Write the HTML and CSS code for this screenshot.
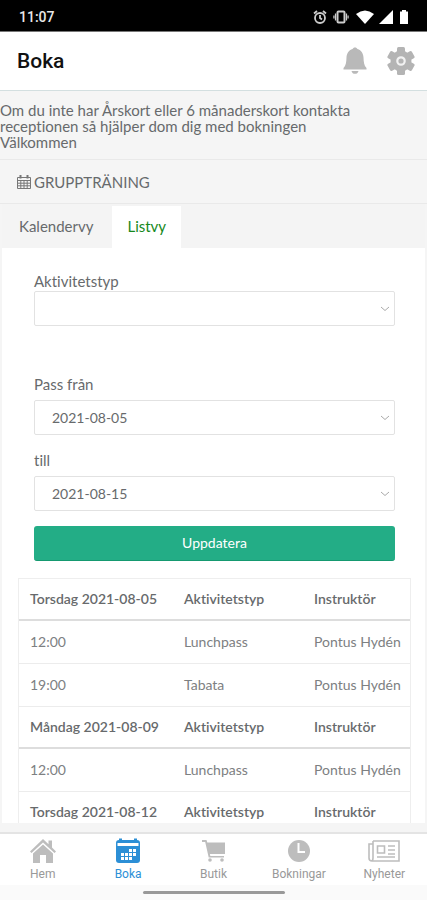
FILE: index.html
```html
<!DOCTYPE html>
<html lang="sv">
<head>
<meta charset="utf-8">
<meta name="viewport" content="width=device-width, initial-scale=1">
<title>Boka</title>
<link rel="stylesheet" href="styles.css">
</head>
<body>
<div class="status">
  <span class="clock">11:07</span>
  <div class="status-icons">
    <svg width="14" height="16" viewBox="0 0 14 16" fill="none" stroke="#ccc" stroke-width="1.800"><circle cx="7" cy="9" r="5"/><path d="M7 6v3l2 1.500M1 4.500l3-2.500M13 4.500l-3-2.500"/></svg>
    <svg width="16" height="16" viewBox="0 0 16 16" fill="none" stroke="#ccc" stroke-width="2"><rect x="4.500" y="2.500" width="7" height="11" rx="1"/><path d="M2.500 4.500v7M13.500 4.500v7M.9 6.500v3M15.100 6.500v3" stroke-width="1.200"/></svg>
    <svg width="20" height="16" viewBox="0 0 20 16" fill="#fff"><path d="M1 5Q10-2 19 5L10 15z"/></svg>
    <svg width="14" height="16" viewBox="0 0 14 16" fill="#fff"><path d="M14 1v14H0z"/></svg>
    <svg class="battery" width="10" height="16" viewBox="0 0 10 16" fill="#fff"><path d="M3 1h4v1.500h2V15H1V2.500h2z"/></svg>
  </div>
</div>
<header class="appbar">
  <h1>Boka</h1>
  <button class="icon-button" aria-label="Aviseringar"><svg width="24" height="28" viewBox="0 0 24 28" fill="#b9b9b9"><path d="M12 0.500c-1.300 0-2 .6-2.400 1.500C5.500 3.400 3.700 6.500 3.500 10.500 3.300 15 3 18.500.5 21v1.500h23V21c-2.500-2.500-2.800-6-3-10.500-.2-4-2-7.100-6.100-8.500C14 1.100 13.300.5 12 .5zM8.500 24h7c-.5 2-1.800 2.800-3.500 2.800s-3-.8-3.500-2.800z"/></svg></button>
  <button class="icon-button" aria-label="Inställningar"><svg width="28" height="28" viewBox="0 0 28 28"><g fill="#b4b4b4"><circle cx="14" cy="14" r="10.500"/><rect x="10" y="0" width="8" height="28" rx="1.500"/><rect x="10" y="0" width="8" height="28" rx="1.500" transform="rotate(60 14 14)"/><rect x="10" y="0" width="8" height="28" rx="1.500" transform="rotate(120 14 14)"/></g><circle cx="14" cy="14" r="3.700" fill="#b4b4b4" stroke="#f2f2f2" stroke-width="2.200"/></svg></button>
</header>
<main>
  <p class="notice">Om du inte har Årskort eller 6 månaderskort kontakta<br>receptionen så hjälper dom dig med bokningen<br>Välkommen</p>
  <h2><svg width="14" height="15" viewBox="0 0 14 15" fill="none" stroke="#777"><path d="M.5 3.500h13v11H.5zM.5 6.500h13M.5 9.200h13M.5 11.800h13M3.800 6v8M7 6v8M10.200 6v8"/><path d="M3.500 1v3.500M10.500 1v3.500" stroke-width="2"/></svg>GRUPPTRÄNING</h2>
  <section class="panel">
    <nav class="tabs"><a href="#kalender">Kalendervy</a><a href="#lista" class="active">Listvy</a></nav>
    <form class="filters">
      <div class="field activity">
        <label for="type">Aktivitetstyp</label>
        <div class="select"><select id="type"><option></option></select><svg width="10" height="6" viewBox="0 0 10 6"><path d="M1 1l4 3.500L9 1"/></svg></div>
      </div>
      <div class="field">
        <label for="from">Pass från</label>
        <div class="select"><select id="from"><option>2021-08-05</option></select><svg width="10" height="6" viewBox="0 0 10 6"><path d="M1 1l4 3.500L9 1"/></svg></div>
      </div>
      <div class="field">
        <label for="to">till</label>
        <div class="select"><select id="to"><option>2021-08-15</option></select><svg width="10" height="6" viewBox="0 0 10 6"><path d="M1 1l4 3.500L9 1"/></svg></div>
      </div>
      <button type="button" class="update">Uppdatera</button>
    </form>
    <div class="table-wrap">
      <table>
        <tr><th class="day">Torsdag 2021-08-05</th><th class="kind">Aktivitetstyp</th><th>Instruktör</th></tr>
        <tr><td>12:00</td><td>Lunchpass</td><td>Pontus Hydén</td></tr>
        <tr><td>19:00</td><td>Tabata</td><td>Pontus Hydén</td></tr>
        <tr><th>Måndag 2021-08-09</th><th>Aktivitetstyp</th><th>Instruktör</th></tr>
        <tr><td>12:00</td><td>Lunchpass</td><td>Pontus Hydén</td></tr>
        <tr><th>Torsdag 2021-08-12</th><th>Aktivitetstyp</th><th>Instruktör</th></tr>
      </table>
    </div>
  </section>
</main>
<nav class="bottom">
  <a href="#hem"><svg width="28" height="26" viewBox="0 0 28 26" fill="#bdbdbd"><path d="M14 1L1 13.500l1.500 1.500L14 4.500 25.500 15l1.500-1.500-4-4V2.500h-3.500v3.700z"/><path d="M14 6.500L4 15.500V25h7v-8h6v8h7v-9.500z"/></svg>Hem</a>
  <a href="#boka" class="current"><svg width="26" height="26" viewBox="0 0 26 26"><rect x="1" y="2" width="24" height="23" rx="3" fill="#2c8fd6"/><path d="M2.500 6.500h21" stroke="#fff" stroke-width="3"/><path d="M5.500 0.500v4M20.500 0.500v4" stroke="#2c8fd6" stroke-width="3"/><g fill="#fff"><path d="M14 11h3v3h-3zM18 11h3v3h-3zM6 15h3v3H6zM10 15h3v3h-3zM14 15h3v3h-3zM18 15h3v3h-3zM6 19h3v3H6zM10 19h3v3h-3zM14 19h3v3h-3z"/></g></svg>Boka</a>
  <a href="#butik"><svg width="26" height="26" viewBox="0 0 26 26" fill="#bdbdbd"><path d="M2 2h4.500l.8 2.500H25V16H9.900l.4 2H24v1.500H8.700L5.200 4H2z"/><circle cx="10" cy="22" r="1.800"/><circle cx="22" cy="22" r="1.800"/></svg>Butik</a>
  <a href="#bokningar"><svg width="26" height="26" viewBox="0 0 26 26"><circle cx="13" cy="13" r="11" fill="#bdbdbd"/><path d="M12.500 5v9H19" fill="none" stroke="#fff" stroke-width="2"/></svg>Bokningar</a>
  <a href="#nyheter"><svg width="32" height="26" viewBox="0 0 32 26" fill="none" stroke="#bdbdbd" stroke-width="1.600"><path d="M5 3h26v20H4c-2 0-3-1-3-3V6h4M5 3v17c0 2-1 3-2 3"/><path d="M9.500 8h7v7h-7zM20 8h7M20 12h7M20 16h7M9 19h18"/></svg>Nyheter</a>
</nav>
<div class="gesture"><span></span></div>
</body>
</html>
```
FILE: styles.css
```css
* { box-sizing: border-box; }
body {
  margin: 0;
  height: 100vh;
  display: flex;
  flex-direction: column;
  overflow: hidden;
  background: #f5f5f5;
  color: #676a6c;
  font: 14px/16px Lato, sans-serif;
  font-variant-ligatures: none;
}
h1, h2, p { margin: 0; }
a { color: inherit; text-decoration: none; }
svg { display: block; flex: none; }
button, select { font: inherit; color: inherit; border: 0; }
.status {
  flex: none;
  height: 32px;
  display: flex;
  align-items: center;
  justify-content: space-between;
  padding: 2px 18px 0 19px;
  background: #000;
  color: #e8e8e8;
  border-bottom: 1px solid #777;
}
.clock { font: 500 14px/16px Roboto, sans-serif; }
.status-icons { display: flex; gap: 4px; align-items: center; }
.status-icons svg:nth-child(2) { margin: 0 2px; }
.battery { margin-left: 2px; }
.appbar {
  flex: none;
  height: 59px;
  display: flex;
  align-items: center;
  gap: 20px;
  padding: 0 12px 0 17px;
  background: #fff;
  border-bottom: 1px solid #d3dfe0;
}
h1 { flex: 1; color: #111; font: 500 21px/24px Roboto, sans-serif; }
.icon-button { padding: 0; background: none; }
main { flex: 1; min-height: 0; overflow: hidden; border-bottom: 9px solid #f5f5f5; }
.notice { padding: 11px 0 9px; border-bottom: 1px solid #e9e9e9; font-size: 15px; }
h2 {
  display: flex;
  align-items: center;
  gap: 3px;
  height: 44px;
  padding-left: 17px;
  border-bottom: 1px solid #e9e9e9;
  font-size: 15px;
  font-weight: 400;
}
.panel { margin: 0 2px; background: #fff; }
.tabs { display: flex; height: 44px; background: #f4f4f4; }
.tabs a { display: flex; align-items: center; padding: 0 17px; font-size: 15px; }
.tabs .active { margin: 2px 0 0 2px; padding: 0 15px 2px; background: #fff; color: #16891c; }
.filters { padding: 25px 30px 17px 32px; }
.field { margin-bottom: 17px; }
.activity { margin-bottom: 50px; }
label { display: block; font-size: 15px; margin-bottom: 8px; }
.activity label { margin-bottom: 2px; }
.select { position: relative; }
.select select {
  appearance: none;
  display: block;
  width: 100%;
  height: 35px;
  padding: 0 17px;
  background: #fff;
  border: 1px solid #e2e2e2;
  border-radius: 2px;
}
.select svg { position: absolute; right: 5px; top: 15px; fill: none; stroke: #aaa; }
.field:last-of-type { margin-bottom: 15px; }
.update {
  display: block;
  width: 100%;
  height: 35px;
  background: #23ad86;
  color: #fff;
  border-bottom: 1px solid #159970;
  border-radius: 3px;
}
.table-wrap { margin: 0 14px 0 16px; }
table {
  width: 100%;
  border-collapse: separate;
  border-spacing: 0;
  table-layout: fixed;
  border: 1px solid #eee;
  border-bottom: 0;
}
.day { width: 154px; }
.kind { width: 130px; }
th, td { height: 43px; padding: 0 0 0 11px; text-align: left; white-space: nowrap; border-bottom: 1px solid #ececec; }
th { height: 42px; font-weight: 600; border-bottom: 2px solid #ddd; }
td { color: #7d8082; }
.bottom {
  flex: none;
  height: 53px;
  display: grid;
  grid-template-columns: repeat(5, 1fr);
  background: #fff;
  border-top: 2px solid #e4e4e4;
  color: #999;
  font: 12px/14px Roboto, sans-serif;
}
.bottom a { display: flex; flex-direction: column; align-items: center; gap: 3px; padding-top: 4px; }
.bottom .current { color: #2c8fd6; }
.gesture { flex: none; height: 15px; display: flex; justify-content: center; padding-top: 6px; background: #fafafa; }
.gesture span { width: 142px; height: 3px; border-radius: 2px; background: #999; }
```
